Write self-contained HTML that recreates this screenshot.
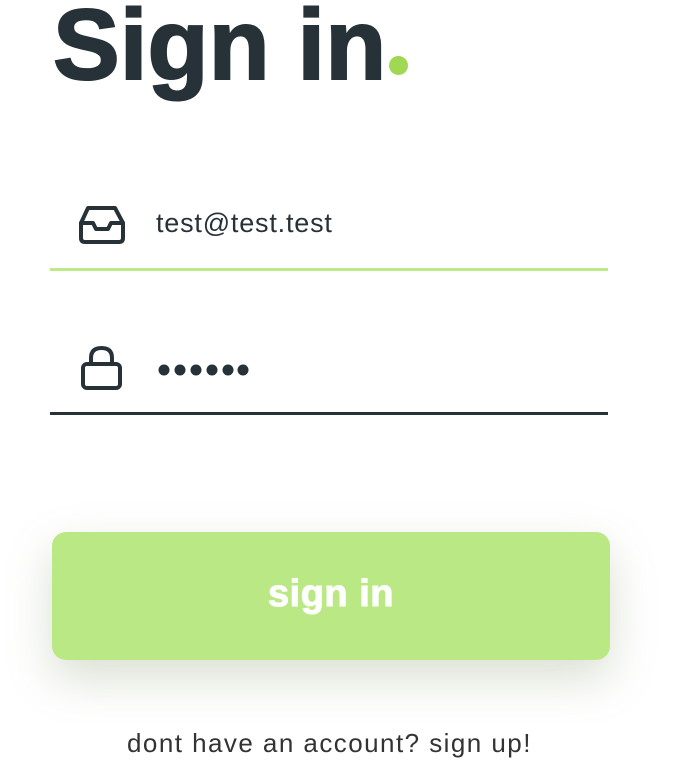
<!DOCTYPE html>
<html><head><style>
body{margin:0;width:678px;height:760px;background:#fff;font-family:"Liberation Sans",sans-serif;color:#263238;position:relative;overflow:hidden}
.t{position:absolute;left:53px;top:-15px;font-size:100px;font-weight:bold;letter-spacing:0px;line-height:120px;-webkit-text-stroke:2px #263238}
.dot{position:absolute;left:389px;top:56px;width:19px;height:19px;border-radius:50%;background:#a0d854}
.line{position:absolute;left:50px;width:558px;height:3px}
.in{position:absolute;left:156px;font-size:27px;letter-spacing:0.8px;color:#263238}
.btn{position:absolute;left:52px;top:532px;width:558px;height:128px;border-radius:14px;background:#bae884;box-shadow:0 18px 45px rgba(120,140,90,.28);color:#fff;font-weight:bold;font-size:38px;letter-spacing:0.5px;text-align:center;line-height:124px;-webkit-text-stroke:1px #fff}
.b{position:absolute;left:127px;top:728px;font-size:26px;letter-spacing:1.45px;color:#333;white-space:nowrap}
</style></head><body>
<div class="t">Sign in</div><div class="dot"></div>
<svg style="position:absolute;left:78px;top:205px" width="48" height="40" viewBox="0 0 48 40" fill="none" stroke="#263238" stroke-width="4" stroke-linejoin="round" stroke-linecap="round"><path d="M10 3H37L45 18V33Q45 37 41 37H7Q3 37 3 33V18Z"/><path d="M3 18H15L18 24H30L33 18H45"/></svg>
<div class="in" style="top:208px">test@test.test</div>
<div class="line" style="top:268px;background:#bde986"></div>
<svg style="position:absolute;left:80px;top:345px" width="44" height="46" viewBox="0 0 44 46" fill="none" stroke="#263238" stroke-width="4" stroke-linejoin="round"><rect x="3" y="19" width="37" height="24" rx="4"/><path d="M11 19V13Q11 3 21.5 3Q32 3 32 13V19"/></svg>
<svg style="position:absolute;left:158px;top:362px" width="92" height="16"><g fill="#263238"><circle cx="6" cy="8" r="5.5"/><circle cx="22" cy="8" r="5.5"/><circle cx="38" cy="8" r="5.5"/><circle cx="54" cy="8" r="5.5"/><circle cx="70" cy="8" r="5.5"/><circle cx="85" cy="8" r="5.5"/></g></svg>
<div class="line" style="top:412px;background:#263238"></div>
<div class="btn">sign in</div>
<div class="b">dont have an account? sign up!</div>
</body></html>
